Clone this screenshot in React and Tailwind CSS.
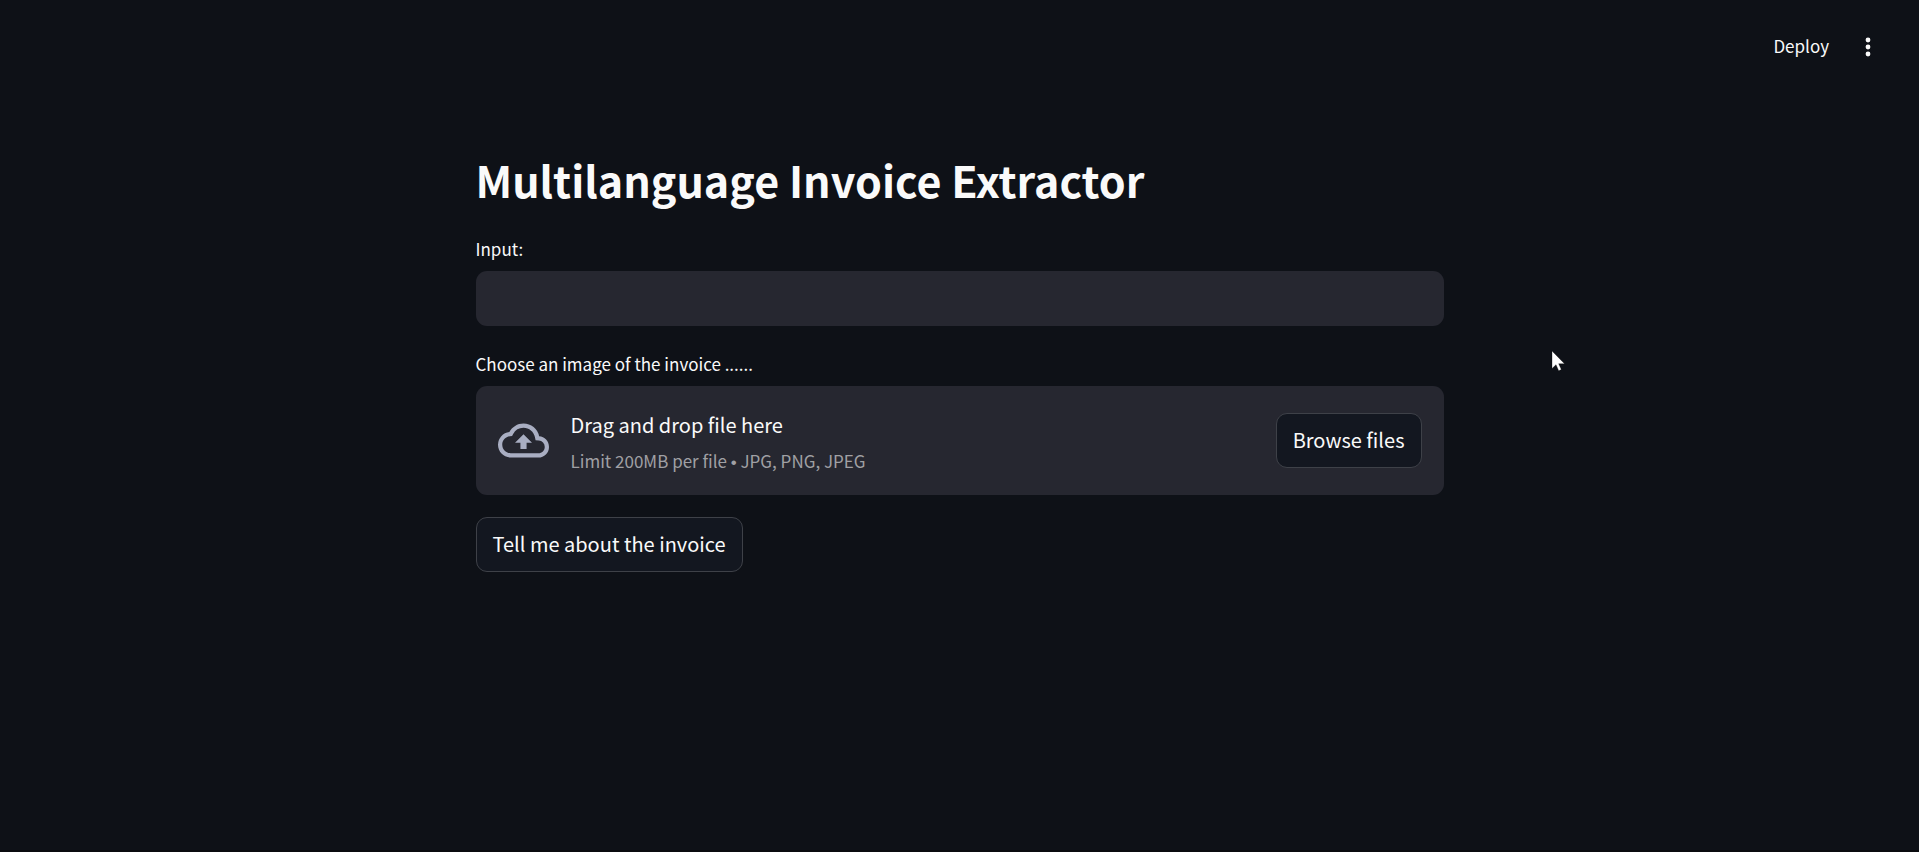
import { useRef } from "react";

const buttonClass =
  "h-[55px] shrink-0 cursor-pointer rounded-[11px] border border-[#3e4148] bg-[#131720] px-4 pb-[2px] text-[20px] leading-7 text-[#fafafa]";

function Header() {
  return (
    <header className="flex h-[93px] items-center justify-end gap-[31px] pr-[43px]">
      <button type="button" className="cursor-pointer pb-[2px] text-[17px] leading-[30px]">
        Deploy
      </button>
      <button type="button" aria-label="Main menu" className="cursor-pointer">
        <svg viewBox="0 0 16 20" className="h-5 w-4" fill="currentColor" aria-hidden="true">
          <circle cx="8" cy="3" r="2.4" />
          <circle cx="8" cy="10" r="2.4" />
          <circle cx="8" cy="17" r="2.4" />
        </svg>
      </button>
    </header>
  );
}

function CloudIcon() {
  return (
    <svg
      viewBox="0 0 24 24"
      className="h-[51px] w-[51px] shrink-0 text-[#a9aec2]"
      fill="currentColor"
      aria-hidden="true"
    >
      <path d="M19.35 10.04A7.49 7.49 0 0012 4C9.11 4 6.6 5.64 5.35 8.04A5.994 5.994 0 000 14c0 3.31 2.69 6 6 6h13c2.76 0 5-2.24 5-5 0-2.64-2.05-4.78-4.65-4.96zM19 18H6c-2.21 0-4-1.79-4-4 0-2.05 1.53-3.76 3.56-3.97l1.07-.11.5-.95A5.469 5.469 0 0112 6c2.62 0 4.88 1.86 5.39 4.43l.3 1.5 1.53.11A2.98 2.98 0 0122 15c0 1.65-1.35 3-3 3zM8 13h2.55v3h2.9v-3H16l-4-4z" />
    </svg>
  );
}

function FileUploader() {
  const fileInput = useRef(null);
  return (
    <div className="flex flex-col gap-[7px]">
      <label htmlFor="invoice-file" className="text-[17px] leading-[31px]">
        Choose an image of the invoice ......
      </label>
      <div className="flex min-h-[109px] items-center rounded-[11px] bg-[#262730] px-[22px]">
        <CloudIcon />
        <div className="ml-[22px] flex flex-1 flex-col gap-1 pt-[7px]">
          <span className="text-[20px] leading-8">Drag and drop file here</span>
          <span className="text-[17px] leading-8 text-[#a0a0a4]">
            Limit 200MB per file <span className="font-['Liberation_Sans',sans-serif]">•</span> JPG,
            PNG, JPEG
          </span>
        </div>
        <input
          ref={fileInput}
          id="invoice-file"
          type="file"
          accept=".jpg,.png,.jpeg"
          className="hidden"
        />
        <button type="button" className={buttonClass} onClick={() => fileInput.current.click()}>
          Browse files
        </button>
      </div>
    </div>
  );
}

function Pointer() {
  return (
    <svg
      viewBox="0 0 14 22"
      className="pointer-events-none absolute left-[1551px] top-[350px] h-[22px] w-[14px]"
      aria-hidden="true"
    >
      <path
        d="M1 1v17.5l4-3.8 2.7 6 2.6-1.1-2.6-5.9H13.5z"
        fill="#fff"
        stroke="#000"
        strokeWidth="0.3"
      />
    </svg>
  );
}

export default function App() {
  return (
    <div className="relative min-h-screen border-b-2 border-[#0a0b0f] bg-[#0e1117] font-['Noto_Sans_CJK_SC',sans-serif] text-[#fafafa]">
      <Header />
      <main className="mx-auto flex max-w-[968px] flex-col gap-[22px] pt-[55px]">
        <h1 className="text-[43px] font-bold leading-[63px]">Multilanguage Invoice Extractor</h1>
        <div className="flex flex-col gap-[7px]">
          <label htmlFor="prompt" className="text-[17px] leading-[31px]">
            Input:
          </label>
          <input
            id="prompt"
            type="text"
            className="h-[55px] w-full rounded-[11px] bg-[#262730] px-4 text-[20px] outline-none"
          />
        </div>
        <FileUploader />
        <button type="button" className={`${buttonClass} self-start`}>
          Tell me about the invoice
        </button>
      </main>
      <Pointer />
    </div>
  );
}
